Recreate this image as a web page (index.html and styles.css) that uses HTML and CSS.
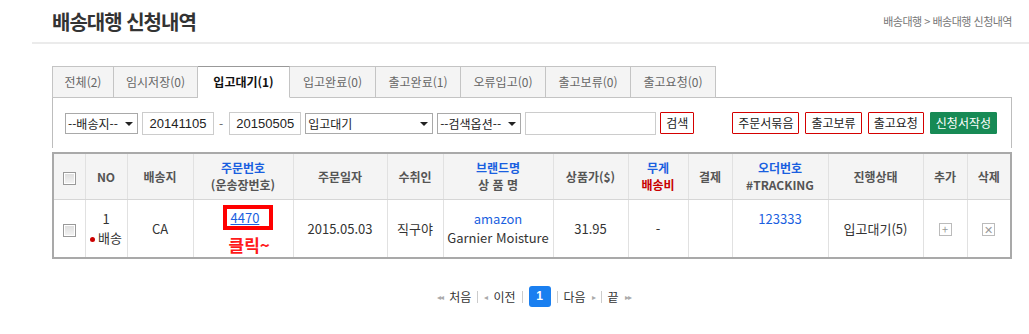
FILE: index.html
```html
<!DOCTYPE html>
<html lang="ko">
<head>
    <meta charset="utf-8">
    <title>배송대행 신청내역</title>
    <link rel="stylesheet" href="styles.css">
</head>
<body>
    <!-- 제목 -->
    <div class="page-head">
        <h1>배송대행 신청내역</h1>
        <div class="crumb">배송대행 &gt; 배송대행 신청내역</div>
    </div>

    <div class="content">
        <!-- 탭 -->
        <ul class="tabs">
            <li style="width:62px">전체(2)</li>
            <li style="width:84px">임시저장(0)</li>
            <li class="on" style="width:92px">입고대기(1)</li>
            <li style="width:86px">입고완료(0)</li>
            <li style="width:85px">출고완료(1)</li>
            <li style="width:85px">오류입고(0)</li>
            <li style="width:85px">출고보류(0)</li>
            <li style="width:85px">출고요청(0)</li>
        </ul>

        <!-- 검색 -->
        <div class="panel">
            <div class="sel" style="width:73px">--배송지--<span class="arrow"></span></div>
            <input class="date" type="text" value="20141105">
            <span class="dash">-</span>
            <input class="date" type="text" value="20150505">
            <div class="sel" style="width:128px">입고대기<span class="arrow"></span></div>
            <div class="sel" style="width:84px">--검색옵션--<span class="arrow"></span></div>
            <input class="keyword" type="text">
            <button class="btn">검색</button>
            <div class="actions">
                <button class="btn">주문서묶음</button>
                <button class="btn">출고보류</button>
                <button class="btn">출고요청</button>
                <button class="btn green">신청서작성</button>
            </div>
        </div>

        <!-- 목록 -->
        <table class="list">
            <colgroup>
                <col style="width:32px"><col style="width:42px"><col style="width:66px"><col style="width:100px">
                <col style="width:94px"><col style="width:56px"><col style="width:110px"><col style="width:75px">
                <col style="width:60px"><col style="width:44px"><col style="width:96px"><col style="width:95px">
                <col style="width:44px"><col>
            </colgroup>
            <thead>
                <tr>
                    <th><span class="chk"></span></th>
                    <th>NO</th>
                    <th>배송지</th>
                    <th><span class="blue">주문번호</span><br>(운송장번호)</th>
                    <th>주문일자</th>
                    <th>수취인</th>
                    <th><span class="blue">브랜드명</span><br>상 품 명</th>
                    <th>상품가($)</th>
                    <th><span class="blue">무게</span><br><span class="red">배송비</span></th>
                    <th>결제</th>
                    <th><span class="blue">오더번호</span><br>#TRACKING</th>
                    <th>진행상태</th>
                    <th>추가</th>
                    <th>삭제</th>
                </tr>
            </thead>
            <tbody>
                <tr>
                    <td><span class="chk"></span></td>
                    <td>1<br><span class="dot"></span>배송</td>
                    <td>CA</td>
                    <td class="order">
                        <span class="mark"><a href="#">4470</a></span>
                        <span class="click">클릭~</span>
                    </td>
                    <td>2015.05.03</td>
                    <td>직구야</td>
                    <td><span class="blue">amazon</span><br>Garnier Moisture</td>
                    <td>31.95</td>
                    <td>-</td>
                    <td></td>
                    <td class="top"><span class="blue">123333</span></td>
                    <td class="state">입고대기(5)</td>
                    <td><span class="ico">+</span></td>
                    <td><span class="ico">&#x2715;</span></td>
                </tr>
            </tbody>
        </table>

        <!-- 페이지 -->
        <div class="paging">
            <span class="arr">&#x25C2;&#x25C2;</span><span>처음</span><span class="bar"></span>
            <span class="arr">&#x25C2;</span><span>이전</span><span class="bar"></span>
            <span class="cur">1</span><span class="bar"></span>
            <span>다음</span><span class="arr">&#x25B8;</span><span class="bar"></span>
            <span>끝</span><span class="arr">&#x25B8;&#x25B8;</span>
        </div>
    </div>
</body>
</html>
```

FILE: styles.css
```css
/* 기본 */
* {
    margin: 0;
    padding: 0;
    box-sizing: border-box;
}

body {
    background: #fff;
    color: #333;
    font-family: "Noto Sans CJK KR", "Noto Sans", sans-serif;
    font-size: 12px;
}

/* 제목 */
.page-head {
    margin-left: 32px;
    height: 44px;
    border-bottom: 2px solid #ebebeb;
    display: flex;
    justify-content: space-between;
    align-items: center;
    padding: 0 17px 0 20px;
}

h1 {
    font-size: 20px;
    font-weight: 700;
    color: #333;
    letter-spacing: -1px;
}

.crumb {
    font-size: 11px;
    color: #777;
    letter-spacing: -0.5px;
}

.content {
    margin-left: 52px;
    width: 960px;
}

/* 탭 */
.tabs {
    list-style: none;
    display: flex;
    margin-top: 22px;
    height: 32px;
}

.tabs li {
    height: 32px;
    line-height: 30px;
    text-align: center;
    color: #666;
    background: #f4f4f4;
    border: 1px solid #c4c4c4;
    border-left: none;
    font-size: 12px;
}

.tabs li:first-child {
    border-left: 1px solid #c4c4c4;
}

.tabs li.on {
    background: #fff;
    color: #111;
    font-weight: 700;
    border-top: 1px solid #999;
    border-bottom-color: #fff;
    position: relative;
    z-index: 1;
}

/* 검색 */
.panel {
    margin-top: -1px;
    border: 1px solid #bdbdbd;
    border-bottom: none;
    height: 51px;
    display: flex;
    align-items: center;
    padding: 0 12px;
}

.sel {
    height: 21px;
    border: 1px solid #a9a9a9;
    font-size: 12px;
    color: #222;
    line-height: 19px;
    padding-left: 2px;
    position: relative;
    margin-right: 4px;
    background: #fff;
}

.arrow {
    position: absolute;
    right: 4px;
    top: 8px;
    border-left: 4px solid transparent;
    border-right: 4px solid transparent;
    border-top: 4px solid #222;
}

.date {
    width: 72px;
    height: 23px;
    border: 1px solid #ccc;
    font-family: "Liberation Sans", Arial, sans-serif;
    font-size: 13px;
    color: #222;
    text-align: center;
    margin-right: 4px;
}

.dash {
    color: #666;
    margin: 0 6px 0 1px;
}

.keyword {
    width: 131px;
    height: 23px;
    border: 1px solid #ccc;
    margin: 0 4px 0 0;
}

.btn {
    height: 22px;
    padding: 0 5px;
    border: 1px solid #d40000;
    border-radius: 1px;
    background: #fff;
    color: #222;
    font-family: "Noto Sans CJK KR", sans-serif;
    font-size: 12px;
    line-height: 20px;
}

.actions {
    margin-left: auto;
    margin-right: 2px;
    display: flex;
    gap: 6px;
}

.btn.green {
    background: #178a55;
    border-color: #178a55;
    color: #fff;
}

/* 목록 */
.list {
    width: 960px;
    margin-top: 4px;
    border-collapse: collapse;
    table-layout: fixed;
    border: 2px solid #a9a9a9;
}

.list th, .list td {
    border: 1px solid #e1e1e1;
    text-align: center;
    vertical-align: middle;
}

.list th {
    height: 46px;
    background: #f4f4f4;
    color: #555;
    font-size: 12px;
    font-weight: 700;
    line-height: 17px;
    border-bottom-color: #d6d6d6;
}

.list td {
    height: 59px;
    font-size: 13px;
    color: #333;
    line-height: 19px;
}

.blue {
    color: #1a5fe0;
}

.red {
    color: #c80000;
}

.chk {
    display: inline-block;
    width: 13px;
    height: 13px;
    border: 1px solid #999;
    background: linear-gradient(#dcdcdc, #f4f4f4);
    box-shadow: inset 0 0 0 1px #fff;
    vertical-align: middle;
}

.dot {
    display: inline-block;
    width: 5px;
    height: 5px;
    border-radius: 50%;
    background: #c00;
    margin-right: 3px;
    vertical-align: middle;
}

.list td.order {
    position: relative;
    vertical-align: top;
    text-align: left;
    padding: 5px 0 0 29px;
}

.mark {
    display: inline-block;
    border: 4px solid #ff0000;
    padding: 0 10px 0 4px;
    height: 25px;
    line-height: 17px;
}

.mark a {
    color: #1a5fe0;
    font-size: 13px;
}

.click {
    position: absolute;
    left: 35px;
    top: 35px;
    color: #ff1a1a;
    font-size: 17px;
    font-weight: 700;
}

.list td.top {
    vertical-align: top;
    padding-top: 9px;
}

.state {
    font-size: 14px;
}

.ico {
    display: inline-block;
    width: 13px;
    height: 13px;
    border: 1px solid #bbb;
    color: #999;
    font-size: 11px;
    line-height: 11px;
    text-align: center;
}

/* 페이지 */
.paging {
    margin-top: 27px;
    display: flex;
    justify-content: center;
    align-items: center;
    gap: 6px;
    font-size: 12px;
    color: #333;
    padding-left: 4px;
}

.arr {
    color: #aaa;
    font-size: 8px;
    letter-spacing: -1px;
}

.bar {
    width: 1px;
    height: 12px;
    background: #ccc;
}

.cur {
    width: 22px;
    height: 21px;
    background: #1a7ff0;
    border-radius: 3px;
    color: #fff;
    font-weight: 700;
    text-align: center;
    line-height: 21px;
    font-family: "Liberation Sans", Arial, sans-serif;
}
```
